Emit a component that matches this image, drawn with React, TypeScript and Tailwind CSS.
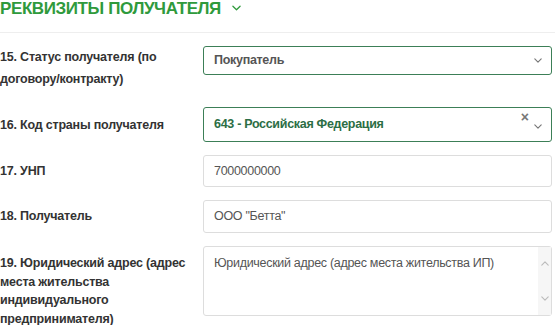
import React from 'react';

const Chevron = ({ className = '' }: { className?: string }) => (
  <svg viewBox="0 0 10 6" className={className} fill="none" stroke="currentColor" strokeWidth={1.4} strokeLinecap="round" strokeLinejoin="round">
    <polyline points="1,1 5,5 9,1" />
  </svg>
);

const Row = ({ label, className = '', labelClass = '', children }: { label: string; className?: string; labelClass?: string; children: React.ReactNode }) => (
  <div className={`flex items-start ${className}`}>
    <div className={`w-[203px] shrink-0 pr-2 text-[12.5px] tracking-[-0.2px] font-bold text-[#333] ${labelClass}`}>{label}</div>
    <div className="w-[349px]">{children}</div>
  </div>
);

export default function App() {
  return (
    <div className="w-[555px] h-[325px] overflow-hidden bg-white" style={{ fontFamily: '"Liberation Sans", Arial, sans-serif' }}>
      <div className="flex items-start h-[19px]">
        <h2 className="text-[17px] font-bold uppercase text-[#2f9a3c] leading-[17px] tracking-[-0.4px]">Реквизиты получателя</h2>
        <Chevron className="ml-[11px] mt-[5px] w-[9px] h-[6px] text-[#2f9a3c]" />
      </div>
      <div className="mt-[13px] h-px bg-[#eeeeee]" />

      <Row label="15. Статус получателя (по договору/контракту)" className="mt-[13px]" labelClass="leading-[22px]">
        <div className="h-[29px] border border-[#3c7f57] rounded-[3px] flex items-center pl-[10px] pr-[9px]">
          <span className="flex-1 text-[12.5px] tracking-[-0.3px] font-bold text-[#555]">Покупатель</span>
          <Chevron className="w-[8px] h-[5px] text-[#777]" />
        </div>
      </Row>

      <Row label="16. Код страны получателя" className="mt-[17px]" labelClass="pt-[7px] leading-[22px]">
        <div className="relative h-[35px] border border-[#3c7f57] rounded-[3px] flex items-center pl-[10px] pr-[9px]">
          <span className="flex-1 text-[12.5px] tracking-[-0.3px] font-bold text-[#2c6e45]">643 - Российская Федерация</span>
          <span className="absolute right-[22px] top-[2px] text-[14px] font-bold text-[#777] leading-none">×</span>
          <Chevron className="w-[8px] h-[5px] mt-[4px] text-[#777]" />
        </div>
      </Row>

      <Row label="17. УНП" className="mt-[13px]" labelClass="pt-[5px] leading-[22px]">
        <div className="h-[32px] border border-[#dddddd] rounded-[3px] flex items-center pl-[10px] text-[12.5px] tracking-[-0.3px] text-[#555]">7000000000</div>
      </Row>

      <Row label="18. Получатель" className="mt-[13px]" labelClass="pt-[5px] leading-[22px]">
        <div className="h-[33px] border border-[#dddddd] rounded-[3px] flex items-center pl-[10px] text-[12.5px] tracking-[-0.3px] text-[#555]">ООО "Бетта"</div>
      </Row>

      <Row label="19. Юридический адрес (адрес места жительства индивидуального предпринимателя)" className="mt-[13px]" labelClass="pt-[8px] leading-[18.5px]">
        <div className="h-[70px] border border-[#dddddd] rounded-[3px] flex">
          <div className="flex-1 pl-[10px] pt-[8px] text-[12.5px] tracking-[-0.3px] text-[#555] leading-[17px]">Юридический адрес (адрес места жительства ИП)</div>
          <div className="w-[13px] bg-[#f6f6f6] flex flex-col items-center justify-between py-[14px]">
            <Chevron className="w-[8px] h-[5px] rotate-180 text-[#bbb]" />
            <Chevron className="w-[8px] h-[5px] text-[#bbb]" />
          </div>
        </div>
      </Row>
    </div>
  );
}
